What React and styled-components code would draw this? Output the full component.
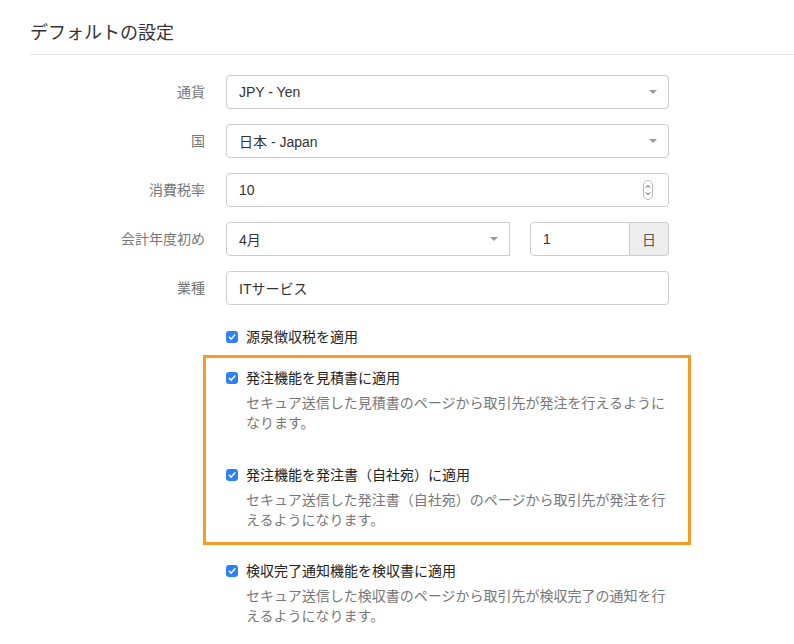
import React from "react";
import styled, { createGlobalStyle } from "styled-components";

const Global = createGlobalStyle`
  html, body { margin: 0; padding: 0; background: #fff; }
  body {
    font-family: "Liberation Sans", "Noto Sans CJK JP", sans-serif;
    font-size: 14px;
    color: #333;
  }
`;

const Page = styled.div`
  padding-left: 30px;
  width: 764px;
`;

const Heading = styled.h2`
  margin: 0;
  padding: 20px 0 8px;
  font-size: 18px;
  line-height: 26px;
  font-weight: 400;
  color: #333;
  border-bottom: 1px solid #e8e8e8;
`;

const Form = styled.div`
  margin-top: 20px;
  display: flex;
  flex-direction: column;
  gap: 15px;
`;

const Row = styled.div`
  display: grid;
  grid-template-columns: 175px 443px;
  column-gap: 21px;
  align-items: center;
`;

const Label = styled.div`
  text-align: right;
  color: #777;
  line-height: 20px;
`;

const Field = styled.div`
  box-sizing: border-box;
  height: 34px;
  border: 1px solid #ccc;
  border-radius: ${(p) => p.$radius || "4px"};
  padding: 0 ${(p) => p.$pr || "12px"} 0 12px;
  display: flex;
  align-items: center;
  justify-content: space-between;
  color: #333;
  background: #fff;
  width: ${(p) => p.$w || "auto"};
  flex: ${(p) => p.$flex || "none"};
`;

const Caret = styled.span`
  width: 0;
  height: 0;
  border-left: 4px solid transparent;
  border-right: 4px solid transparent;
  border-top: 4px solid #999;
  margin-right: 0px;
`;

const Split = styled.div`
  display: flex;
  gap: 20px;
`;

const Group = styled.div`
  display: flex;
  flex: 1;
`;

const Addon = styled.div`
  box-sizing: border-box;
  width: 39px;
  height: 34px;
  display: flex;
  align-items: center;
  justify-content: center;
  background: #eee;
  border: 1px solid #ccc;
  border-left: none;
  border-radius: 0 4px 4px 0;
  color: #555;
`;

const Checks = styled.div`
  margin-left: 196px;
  width: 443px;
  margin-top: 22px;
  display: flex;
  flex-direction: column;
`;

const Item = styled.div`
  margin-top: ${(p) => p.$mt || 0}px;
`;

const CheckLine = styled.div`
  display: flex;
  align-items: center;
  gap: 8px;
  line-height: 20px;
  color: #222;
`;

const Desc = styled.div`
  margin-top: 5px;
  padding-left: 20px;
  line-height: 20px;
  color: #777;
`;

const Highlight = styled.div`
  margin: 8px -22px 0 -23px;
  padding: 10px 19px 12px 20px;
  border: 3px solid #f99b22;
  display: flex;
  flex-direction: column;
  gap: 32px;
`;

const Box = styled.svg`
  flex: none;
  display: block;
`;

function CheckBox() {
  return (
    <Box width="12" height="12" viewBox="0 0 12 12">
      <rect x="0" y="0" width="12" height="12" rx="3" fill="#2f80f6" />
      <path d="M3.3 6.2 L5.2 8.1 L8.8 3.9" fill="none" stroke="#fff" strokeWidth="1.5" strokeLinecap="round" strokeLinejoin="round" />
    </Box>
  );
}

function Spinner() {
  return (
    <Box width="10" height="20" viewBox="0 0 10 20">
      <rect x="0.5" y="0.5" width="9" height="19" rx="4.5" fill="#fff" stroke="#bbb" />
      <path d="M3 7.5 L5 5.5 L7 7.5" fill="none" stroke="#333" strokeWidth="1" />
      <path d="M3 12.5 L5 14.5 L7 12.5" fill="none" stroke="#333" strokeWidth="1" />
    </Box>
  );
}

function CheckItem({ title, desc, mt }) {
  return (
    <Item $mt={mt}>
      <CheckLine>
        <CheckBox />
        <span>{title}</span>
      </CheckLine>
      {desc && <Desc>{desc}</Desc>}
    </Item>
  );
}

export default function App() {
  return (
    <>
      <Global />
      <Page>
        <Heading>デフォルトの設定</Heading>
        <Form>
          <Row>
            <Label>通貨</Label>
            <Field $pr="11px">
              <span>JPY - Yen</span>
              <Caret />
            </Field>
          </Row>
          <Row>
            <Label>国</Label>
            <Field $pr="11px">
              <span>日本 - Japan</span>
              <Caret />
            </Field>
          </Row>
          <Row>
            <Label>消費税率</Label>
            <Field $pr="15px">
              <span>10</span>
              <Spinner />
            </Field>
          </Row>
          <Row>
            <Label>会計年度初め</Label>
            <Split>
              <Field $w="284px" $pr="11px" $radius="4px 0 0 4px">
                <span>4月</span>
                <Caret />
              </Field>
              <Group>
                <Field $flex="1" $radius="4px 0 0 4px">
                  <span>1</span>
                </Field>
                <Addon>日</Addon>
              </Group>
            </Split>
          </Row>
          <Row>
            <Label>業種</Label>
            <Field>
              <span>ITサービス</span>
            </Field>
          </Row>
        </Form>
        <Checks>
          <CheckItem title="源泉徴収税を適用" />
          <Highlight>
            <CheckItem
              title="発注機能を見積書に適用"
              desc="セキュア送信した見積書のページから取引先が発注を行えるようになります。"
            />
            <CheckItem
              title="発注機能を発注書（自社宛）に適用"
              desc="セキュア送信した発注書（自社宛）のページから取引先が発注を行えるようになります。"
            />
          </Highlight>
          <CheckItem
            mt={16}
            title="検収完了通知機能を検収書に適用"
            desc="セキュア送信した検収書のページから取引先が検収完了の通知を行えるようになります。"
          />
        </Checks>
      </Page>
    </>
  );
}
